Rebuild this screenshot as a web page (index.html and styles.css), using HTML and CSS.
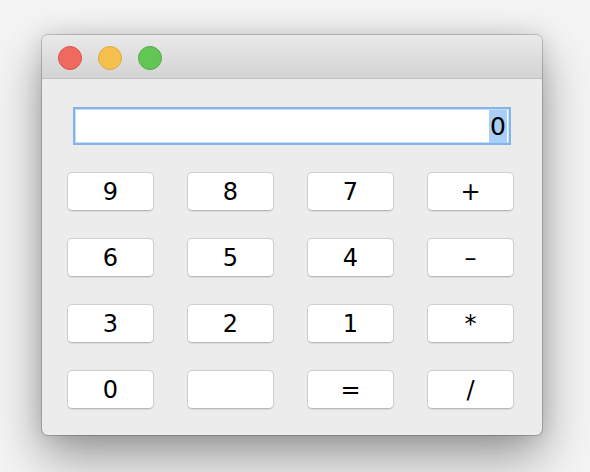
FILE: index.html
```html
<!DOCTYPE html>
<html>
<head>
<meta charset="utf-8">
<link rel="stylesheet" href="styles.css">
</head>
<body>
<div class="window">
  <div class="titlebar">
    <span class="light red"></span>
    <span class="light yellow"></span>
    <span class="light green"></span>
  </div>
  <div class="content">
    <div class="display"><span class="sel">0</span></div>
    <div class="keys">
      <div class="key">9</div>
      <div class="key">8</div>
      <div class="key">7</div>
      <div class="key">+</div>
      <div class="key">6</div>
      <div class="key">5</div>
      <div class="key">4</div>
      <div class="key">–</div>
      <div class="key">3</div>
      <div class="key">2</div>
      <div class="key">1</div>
      <div class="key">*</div>
      <div class="key">0</div>
      <div class="key"></div>
      <div class="key">=</div>
      <div class="key">/</div>
    </div>
  </div>
</div>
</body>
</html>
```
FILE: styles.css
```css
html, body {
  margin: 0;
  padding: 0;
}
body {
  width: 590px;
  height: 472px;
  overflow: hidden;
  background: #f4f4f4;
  font-family: "DejaVu Sans", "Liberation Sans", sans-serif;
}
.window {
  margin: 35px 0 0 42px;
  width: 500px;
  height: 400px;
  border-radius: 6px;
  background: #ececec;
  box-shadow: 0 0 0 1px rgba(0,0,0,0.18), 0 22px 50px rgba(0,0,0,0.38), 0 0 22px rgba(0,0,0,0.12);
  overflow: hidden;
}
.titlebar {
  height: 43px;
  background: linear-gradient(#e9e9e9, #d4d4d4);
  border-bottom: 1px solid #c2c2c2;
  display: flex;
  align-items: center;
  padding-left: 16px;
  gap: 16px;
}
.light {
  width: 24px;
  height: 24px;
  border-radius: 50%;
  box-sizing: border-box;
  margin-top: 2px;
}
.red { background: #ee6a5f; border: 1px solid #d9554c; }
.yellow { background: #f6c04f; border: 1px solid #deaa3e; }
.green { background: #62c655; border: 1px solid #51ac46; }
.content {
  padding: 28px 0 0 25px;
}
.display {
  margin-left: 6px;
  width: 438px;
  height: 38px;
  box-sizing: border-box;
  background: #fff;
  border: 2px solid #84b4ea;
  box-shadow: inset 0 0 0 1px #c6dcf5;
  display: flex;
  justify-content: flex-end;
  align-items: center;
  padding-right: 2px;
  font-size: 25px;
  color: #000;
}
.sel {
  background: #a9cef7;
  padding: 0 1px;
  line-height: 33px;
}
.keys {
  margin-top: 27px;
  display: grid;
  grid-template-columns: repeat(4, 87px);
  grid-auto-rows: 39px;
  column-gap: 33px;
  row-gap: 27px;
}
.key {
  background: #fff;
  border-radius: 5px;
  border: 1px solid #cfcfcf;
  border-bottom-color: #b9b9b9;
  box-shadow: 0 1px 1px rgba(0,0,0,0.08);
  box-sizing: border-box;
  display: flex;
  align-items: center;
  justify-content: center;
  font-size: 24px;
  color: #000;
}
```
